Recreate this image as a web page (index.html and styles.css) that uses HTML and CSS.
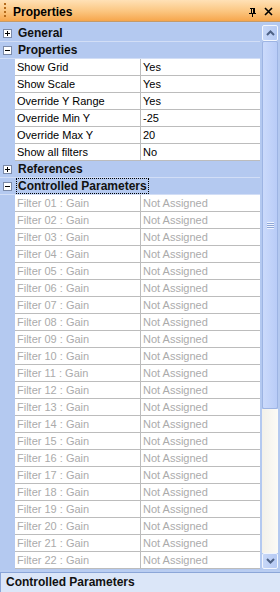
FILE: index.html
```html
<!DOCTYPE html>
<html>
<head>
<meta charset="utf-8">
<link rel="stylesheet" href="styles.css">
</head>
<body>
<div class="window">
  <div class="title">
    <span class="grip"></span>
    <span class="title-text">Properties</span>
    <span class="title-btns">
      <svg width="9" height="10" viewBox="0 0 9 10"><path d="M2 1h5M3 1v5M6 1v5M5 1v5M1 6h7M4.5 6v4" stroke="#000" stroke-width="1" fill="none" shape-rendering="crispEdges"/></svg>
      <svg width="9" height="9" viewBox="0 0 9 9"><path d="M1 1L8 8M8 1L1 8" stroke="#000" stroke-width="1.6" fill="none"/></svg>
    </span>
  </div>
  <div class="grid">
    <div class="rows">
      <div class="cat"><span class="tog plus"></span><span class="cat-name">General</span></div>
      <div class="cat"><span class="tog"></span><span class="cat-name">Properties</span></div>
      <div class="row"><span class="name">Show Grid</span><span class="val">Yes</span></div>
      <div class="row"><span class="name">Show Scale</span><span class="val">Yes</span></div>
      <div class="row"><span class="name">Override Y Range</span><span class="val">Yes</span></div>
      <div class="row"><span class="name">Override Min Y</span><span class="val">-25</span></div>
      <div class="row"><span class="name">Override Max Y</span><span class="val">20</span></div>
      <div class="row"><span class="name">Show all filters</span><span class="val">No</span></div>
      <div class="cat"><span class="tog plus"></span><span class="cat-name">References</span></div>
      <div class="cat"><span class="tog"></span><span class="cat-name focus">Controlled Parameters</span></div>
      <div class="row dis"><span class="name">Filter 01 : Gain</span><span class="val">Not Assigned</span></div>
      <div class="row dis"><span class="name">Filter 02 : Gain</span><span class="val">Not Assigned</span></div>
      <div class="row dis"><span class="name">Filter 03 : Gain</span><span class="val">Not Assigned</span></div>
      <div class="row dis"><span class="name">Filter 04 : Gain</span><span class="val">Not Assigned</span></div>
      <div class="row dis"><span class="name">Filter 05 : Gain</span><span class="val">Not Assigned</span></div>
      <div class="row dis"><span class="name">Filter 06 : Gain</span><span class="val">Not Assigned</span></div>
      <div class="row dis"><span class="name">Filter 07 : Gain</span><span class="val">Not Assigned</span></div>
      <div class="row dis"><span class="name">Filter 08 : Gain</span><span class="val">Not Assigned</span></div>
      <div class="row dis"><span class="name">Filter 09 : Gain</span><span class="val">Not Assigned</span></div>
      <div class="row dis"><span class="name">Filter 10 : Gain</span><span class="val">Not Assigned</span></div>
      <div class="row dis"><span class="name">Filter 11 : Gain</span><span class="val">Not Assigned</span></div>
      <div class="row dis"><span class="name">Filter 12 : Gain</span><span class="val">Not Assigned</span></div>
      <div class="row dis"><span class="name">Filter 13 : Gain</span><span class="val">Not Assigned</span></div>
      <div class="row dis"><span class="name">Filter 14 : Gain</span><span class="val">Not Assigned</span></div>
      <div class="row dis"><span class="name">Filter 15 : Gain</span><span class="val">Not Assigned</span></div>
      <div class="row dis"><span class="name">Filter 16 : Gain</span><span class="val">Not Assigned</span></div>
      <div class="row dis"><span class="name">Filter 17 : Gain</span><span class="val">Not Assigned</span></div>
      <div class="row dis"><span class="name">Filter 18 : Gain</span><span class="val">Not Assigned</span></div>
      <div class="row dis"><span class="name">Filter 19 : Gain</span><span class="val">Not Assigned</span></div>
      <div class="row dis"><span class="name">Filter 20 : Gain</span><span class="val">Not Assigned</span></div>
      <div class="row dis"><span class="name">Filter 21 : Gain</span><span class="val">Not Assigned</span></div>
      <div class="row dis"><span class="name">Filter 22 : Gain</span><span class="val">Not Assigned</span></div>
    </div>
    <div class="scroll">
      <div class="sbtn"><svg width="9" height="6" viewBox="0 0 9 6"><path d="M1 5L4.5 1.5L8 5" stroke="#4d6185" stroke-width="2" fill="none"/></svg></div>
      <div class="thumb"><span class="thumb-grip"></span></div>
      <div class="track"></div>
      <div class="sbtn"><svg width="9" height="6" viewBox="0 0 9 6"><path d="M1 1L4.5 4.5L8 1" stroke="#4d6185" stroke-width="2" fill="none"/></svg></div>
    </div>
  </div>
  <div class="desc">Controlled Parameters</div>
</div>
</body>
</html>
```
FILE: styles.css
```css
html, body {
  margin: 0;
  padding: 0;
}
body {
  width: 280px;
  height: 592px;
  overflow: hidden;
  font-family: "Liberation Sans", Arial, sans-serif;
  font-size: 11px;
  background: #b9cdf1;
}
.window {
  display: flex;
  flex-direction: column;
  height: 592px;
}
.title {
  height: 22px;
  flex: none;
  display: flex;
  align-items: center;
  background: linear-gradient(#ffe1b6, #fbc57f 55%, #f6a64c);
  border-bottom: 1px solid #c49a6a;
  box-sizing: border-box;
  padding-top: 2px;
}
.grip {
  width: 2px;
  height: 15px;
  margin-left: 4px;
  margin-top: -2px;
  background: repeating-linear-gradient(#b56b1c 0 2px, transparent 2px 4px);
}
.title-text {
  font-weight: bold;
  font-size: 12px;
  margin-left: 7px;
  flex: 1;
}
.title-btns {
  display: flex;
  align-items: center;
  gap: 7px;
  margin-right: 7px;
}
.grid {
  margin-top: 1px;
  height: 547px;
  display: flex;
  flex: none;
  background: #b4c9f0;
  overflow: hidden;
}
.rows {
  width: 260px;
  padding-top: 2px;
  display: flex;
  flex-direction: column;
}
.cat {
  height: 17px;
  flex: none;
  box-sizing: border-box;
  display: flex;
  align-items: center;
  border-bottom: 1px solid #d2def6;
  background: #b4c9f0;
  white-space: nowrap;
}
.tog {
  width: 9px;
  height: 9px;
  box-sizing: border-box;
  border: 1px solid #7b8aa8;
  background: #fff linear-gradient(#000, #000) center / 5px 1px no-repeat;
  margin-left: 3px;
  flex: none;
}
.tog.plus {
  background:
    linear-gradient(#000, #000) center / 5px 1px no-repeat,
    linear-gradient(#000, #000) center / 1px 5px no-repeat,
    #fff;
}
.cat-name {
  font-weight: bold;
  font-size: 12px;
  margin-left: 5px;
  color: #111;
  padding: 0 1px;
  line-height: 14px;
}
.cat-name.focus {
  outline: 1px dotted #000;
  outline-offset: 0;
}
.row {
  height: 17px;
  flex: none;
  display: flex;
  padding-left: 15px;
}
.name, .val {
  background: #fff;
  border-bottom: 1px solid #bcbcbc;
  box-sizing: border-box;
  line-height: 16px;
  white-space: nowrap;
  overflow: hidden;
}
.name {
  width: 126px;
  padding-left: 2px;
  border-right: 1px solid #bcbcbc;
}
.val {
  flex: 1;
  padding-left: 2px;
}
.dis .name, .dis .val {
  color: #ababab;
}
.scroll {
  width: 16px;
  margin-left: 2px;
  display: flex;
  flex-direction: column;
  padding-top: 2px;
  padding-bottom: 1px;
}
.sbtn {
  height: 16px;
  flex: none;
  box-sizing: border-box;
  border: 1px solid #f2f6fd;
  border-radius: 2px;
  background: linear-gradient(90deg, #c7d7f7, #b6caf4);
  display: flex;
  align-items: center;
  justify-content: center;
}
.thumb {
  height: 368px;
  flex: none;
  box-sizing: border-box;
  border: 1px solid #9db4e3;
  border-radius: 2px;
  background: linear-gradient(90deg, #cbdafb, #b9ccf7);
  display: flex;
  align-items: center;
  justify-content: center;
}
.thumb-grip {
  width: 7px;
  height: 7px;
  background: repeating-linear-gradient(#eef3fe 0 1px, #8ea6d6 1px 2px);
}
.track {
  flex: 1;
  background: linear-gradient(90deg, #f3f1ea, #fbfaf6);
}
.desc {
  margin-top: 2px;
  flex: 1;
  background: #dbe6f8;
  border-top: 1px solid #8ba6d8;
  border-left: 1px solid #8ba6d8;
  font-weight: bold;
  font-size: 12px;
  padding-left: 5px;
  padding-top: 1px;
  line-height: 17px;
  color: #111;
}
```
